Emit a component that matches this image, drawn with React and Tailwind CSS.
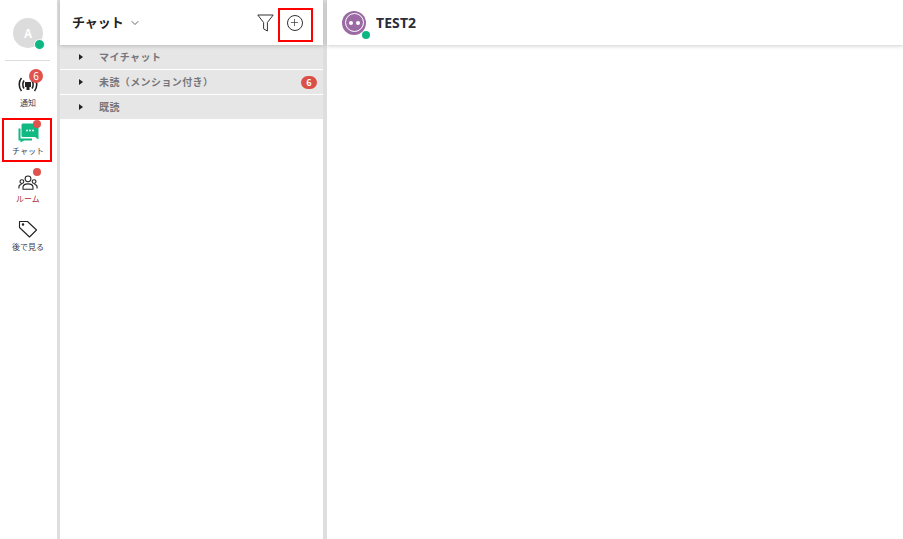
import React from 'react';
import { ChevronDown, Plus } from 'lucide-react';

const jp = { fontFamily: '"Noto Sans CJK JP", "Noto Sans", sans-serif' };

function BroadcastIcon() {
  return (
    <svg width="22" height="20" viewBox="0 0 22 20" fill="none" stroke="#222" strokeWidth="1.6">
      <path d="M4.500 3C1.500 6.500 1.500 12.500 4.500 16" />
      <path d="M7 5.500C5.500 8 5.500 11 7 13.500" />
      <path d="M17.500 3c3 3.500 3 9.500 0 13" />
      <path d="M15 5.500c1.500 2.500 1.500 5.500 0 8" />
      <path d="M8 7h6v5h-1.500v3h-3v-3H8z" fill="#222" stroke="none" />
    </svg>
  );
}

function ChatIcon() {
  return (
    <svg width="21" height="20" viewBox="0 0 21 20">
      <path d="M0.500 5.500H2.500V15.500H14V17.500H6L2.500 19.500V17.500H0.500z" fill="#10b981" />
      <path d="M3.500 2C3.500 1.200 4.200 0.500 5 0.500H19C19.800 0.500 20.500 1.200 20.500 2V16.500L17 14H5C4.200 14 3.500 13.300 3.500 12.500z" fill="#10b981" />
      <circle cx="9" cy="7.500" r="0.9" fill="#fff" />
      <circle cx="12" cy="7.500" r="0.9" fill="#fff" />
      <circle cx="15" cy="7.500" r="0.9" fill="#fff" />
    </svg>
  );
}

function RoomIcon() {
  return (
    <svg width="20" height="17" viewBox="0 0 22 18" fill="none" stroke="#222" strokeWidth="1.2">
      <circle cx="11" cy="5" r="3.200" />
      <path d="M5.500 16.500v-2c0-2.500 2.500-4 5.500-4s5.500 1.500 5.500 4v2z" />
      <circle cx="4.300" cy="8" r="2.100" />
      <path d="M1 15.500v-1.500c0-1.800 1.300-2.800 3-2.800" />
      <circle cx="17.700" cy="8" r="2.100" />
      <path d="M21 15.500v-1.500c0-1.800-1.300-2.800-3-2.800" />
    </svg>
  );
}

function TagIcon() {
  return (
    <svg width="20" height="20" viewBox="0 0 20 20" fill="none" stroke="#222" strokeWidth="1.100" strokeLinejoin="round">
      <path d="M1.500 2.500h8l9 8.500-7 7-10-9.500z" />
      <circle cx="5" cy="5.500" r="0.700" fill="#222" />
    </svg>
  );
}

function FunnelIcon() {
  return (
    <svg width="17" height="18" viewBox="0 0 17 18" fill="none" stroke="#333" strokeWidth="1" strokeLinejoin="round">
      <path d="M0.800 1h15.400l-5.800 7.500v8.500l-3.800-2.200V8.500z" />
    </svg>
  );
}

function RailItem({ icon, label, labelClass, iconClass, dot, count, boxed }) {
  return (
    <div className={`relative w-[48px] h-[42px] flex flex-col items-center pt-[2px] pl-[2px] ${boxed ? 'outline-2 outline-[#ff0000] -outline-offset-1' : ''}`}>
      <div className={`h-[24px] flex items-center justify-center ${iconClass || ''}`}>{icon}</div>
      <span className={`text-[8px] leading-[12px] ${labelClass}`} style={jp}>{label}</span>
      {dot && <span className="absolute top-[1px] right-[10px] w-[8px] h-[8px] rounded-full bg-[#e0524d]" />}
      {count && (
        <span className="absolute top-[-2px] right-[8px] w-[14px] h-[14px] rounded-full bg-[#e0524d] text-white text-[10px] leading-[14px] text-center" style={jp}>{count}</span>
      )}
    </div>
  );
}

function GroupRow({ label, count }) {
  return (
    <div className="h-[24px] bg-[#e6e6e6] flex items-center pl-[19px] pr-[6px]">
      <span className="w-0 h-0 border-y-[3px] border-y-transparent border-l-[4px] border-l-[#222]" />
      <span className="ml-[16px] pb-[2px] text-[10px] font-bold text-[#77777c] tracking-[0.4px]" style={jp}>{label}</span>
      {count && (
        <span className="ml-auto w-[16px] h-[13px] rounded-full bg-[#db5046] text-white text-[9px] font-bold leading-[13px] text-center" style={jp}>{count}</span>
      )}
    </div>
  );
}

export default function App() {
  return (
    <div className="flex h-[539px] w-[903px] overflow-hidden bg-white" style={jp}>
      {/* left rail */}
      <div className="w-[57px] shrink-0 flex flex-col items-start pl-[3px] pt-[18px]">
        <div className="relative ml-[10px] w-[30px] h-[30px] rounded-full bg-[#dcdcdc] flex items-center justify-center text-white text-[12px] font-bold">
          A
          <span className="absolute right-[-2px] bottom-[-2px] w-[11px] h-[11px] rounded-full bg-[#0db783] border border-white" />
        </div>
        <div className="w-[45px] h-px bg-[#dddddd] mt-[12px] mb-[10px] ml-[2px]" />
        <div className="flex flex-col gap-[6px]">
          <RailItem icon={<BroadcastIcon />} label="通知" labelClass="text-[#3a4050]" count="6" />
          <RailItem icon={<ChatIcon />} label="チャット" labelClass="text-[#3a4050]" dot boxed />
          <RailItem icon={<RoomIcon />} label="ルーム" labelClass="text-[#a33]" iconClass="pt-[3px]" dot />
          <RailItem icon={<TagIcon />} label="後で見る" labelClass="text-[#3a4050]" />
        </div>
      </div>
      <div className="w-[3px] shrink-0 bg-[#dedede]" />

      {/* chat list */}
      <div className="w-[263px] shrink-0 flex flex-col">
        <div className="relative h-[45px] shrink-0 flex items-center pl-[12px] pr-[11px] shadow-[0_1px_4px_rgba(0,0,0,0.2)]">
          <span className="pb-[2px] text-[13px] font-bold text-[#222]">チャット</span>
          <ChevronDown size={12} strokeWidth={1.500} className="ml-[5px] text-[#333]" />
          <div className="ml-auto mr-[5px] flex"><FunnelIcon /></div>
          <div className="w-[33px] h-[32px] mt-[4px] pb-[4px] pr-[2px] flex items-center justify-center outline-2 outline-[#ff0000] -outline-offset-1">
            <div className="w-[16px] h-[16px] rounded-full border border-[#333] flex items-center justify-center">
              <Plus size={11} strokeWidth={1.500} className="text-[#333]" />
            </div>
          </div>
        </div>
        <div className="flex flex-col gap-px">
          <GroupRow label="マイチャット" />
          <GroupRow label="未読（メンション付き）" count="6" />
          <GroupRow label="既読" />
        </div>
      </div>
      <div className="w-[4px] shrink-0 bg-[#dedede]" />

      {/* conversation */}
      <div className="flex-1 flex flex-col">
        <div className="h-[45px] shrink-0 flex items-center pl-[15px] shadow-[0_1px_4px_rgba(0,0,0,0.2)]">
          <div className="relative w-[24px] h-[24px] rounded-full bg-[#9b6aa5] flex items-center justify-center">
            <div className="w-[19px] h-[19px] rounded-full border border-white flex items-center justify-center gap-[3px]">
              <span className="w-[4px] h-[4px] rounded-full bg-white" />
              <span className="w-[4px] h-[4px] rounded-full bg-white" />
            </div>
            <span className="absolute right-[-4px] bottom-[-4px] w-[8px] h-[8px] rounded-full bg-[#0db783]" />
          </div>
          <span className="ml-[10px] text-[14px] font-bold text-[#2a2d3a] tracking-[0.1px]" style={{ fontFamily: '"Noto Sans", sans-serif' }}>TEST2</span>
        </div>
      </div>
    </div>
  );
}
